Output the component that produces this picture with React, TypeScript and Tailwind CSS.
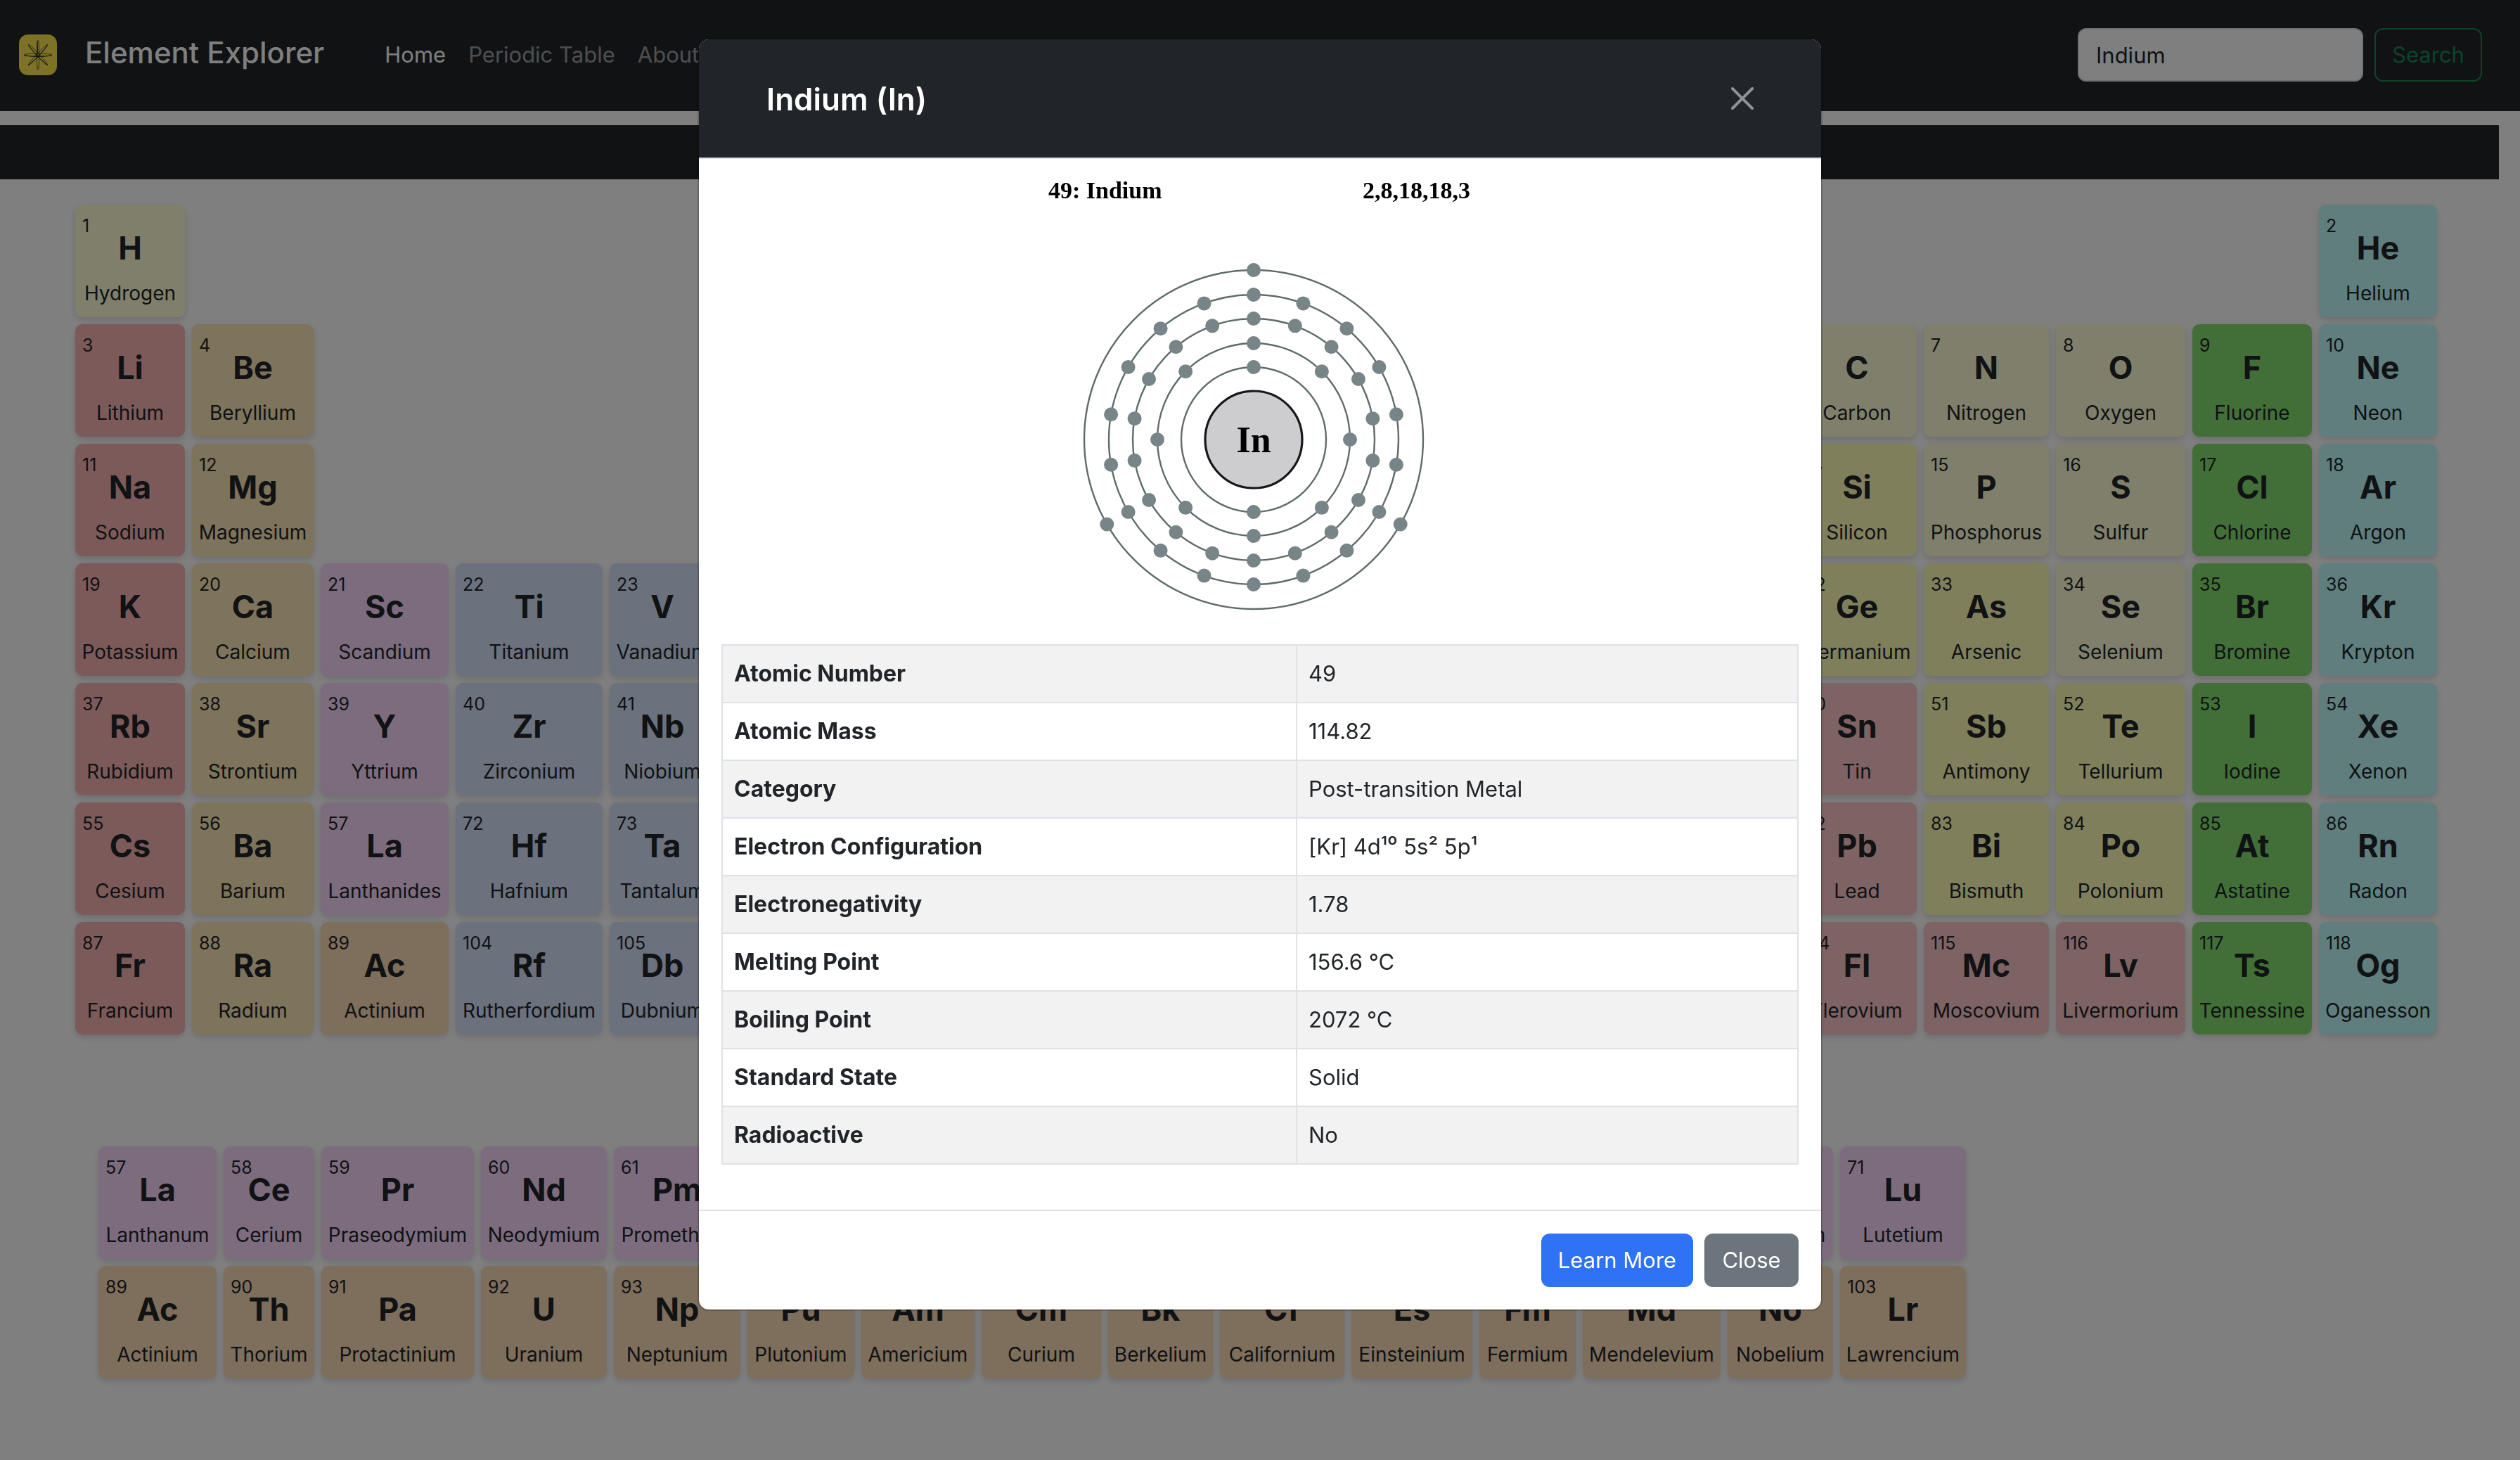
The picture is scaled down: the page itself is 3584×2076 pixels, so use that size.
import React from "react";

type Kind =
  | "nonmetal"
  | "alkali"
  | "alkaline"
  | "transition"
  | "lanthanide"
  | "actinide"
  | "metalloid"
  | "post"
  | "halogen"
  | "noble";

type Cell = [number: number, symbol: string, name: string, kind: Kind];

const kindColor: Record<Kind, string> = {
  nonmetal: "bg-[#ffffd6]",
  alkali: "bg-[#f9b4b4]",
  alkaline: "bg-[#fde6b6]",
  transition: "bg-[#d6e2fa]",
  lanthanide: "bg-[#fad8fc]",
  actinide: "bg-[#fddcb8]",
  metalloid: "bg-[#ffffb8]",
  post: "bg-[#fac6c6]",
  halogen: "bg-[#84de6e]",
  noble: "bg-[#c0fcfc]",
};

const mainRows: (Cell | null)[][] = [
  [[1, "H", "Hydrogen", "nonmetal"], ...Array<null>(16).fill(null), [2, "He", "Helium", "noble"]],
  [
    [3, "Li", "Lithium", "alkali"],
    [4, "Be", "Beryllium", "alkaline"],
    ...Array<null>(10).fill(null),
    [5, "B", "Boron", "metalloid"],
    [6, "C", "Carbon", "nonmetal"],
    [7, "N", "Nitrogen", "nonmetal"],
    [8, "O", "Oxygen", "nonmetal"],
    [9, "F", "Fluorine", "halogen"],
    [10, "Ne", "Neon", "noble"],
  ],
  [
    [11, "Na", "Sodium", "alkali"],
    [12, "Mg", "Magnesium", "alkaline"],
    ...Array<null>(10).fill(null),
    [13, "Al", "Aluminum", "post"],
    [14, "Si", "Silicon", "metalloid"],
    [15, "P", "Phosphorus", "nonmetal"],
    [16, "S", "Sulfur", "nonmetal"],
    [17, "Cl", "Chlorine", "halogen"],
    [18, "Ar", "Argon", "noble"],
  ],
  [
    [19, "K", "Potassium", "alkali"],
    [20, "Ca", "Calcium", "alkaline"],
    [21, "Sc", "Scandium", "lanthanide"],
    [22, "Ti", "Titanium", "transition"],
    [23, "V", "Vanadium", "transition"],
    [24, "Cr", "Chromium", "transition"],
    [25, "Mn", "Manganese", "transition"],
    [26, "Fe", "Iron", "transition"],
    [27, "Co", "Cobalt", "transition"],
    [28, "Ni", "Nickel", "transition"],
    [29, "Cu", "Copper", "transition"],
    [30, "Zn", "Zinc", "transition"],
    [31, "Ga", "Gallium", "post"],
    [32, "Ge", "Germanium", "metalloid"],
    [33, "As", "Arsenic", "metalloid"],
    [34, "Se", "Selenium", "nonmetal"],
    [35, "Br", "Bromine", "halogen"],
    [36, "Kr", "Krypton", "noble"],
  ],
  [
    [37, "Rb", "Rubidium", "alkali"],
    [38, "Sr", "Strontium", "alkaline"],
    [39, "Y", "Yttrium", "lanthanide"],
    [40, "Zr", "Zirconium", "transition"],
    [41, "Nb", "Niobium", "transition"],
    [42, "Mo", "Molybdenum", "transition"],
    [43, "Tc", "Technetium", "transition"],
    [44, "Ru", "Ruthenium", "transition"],
    [45, "Rh", "Rhodium", "transition"],
    [46, "Pd", "Palladium", "transition"],
    [47, "Ag", "Silver", "transition"],
    [48, "Cd", "Cadmium", "transition"],
    [49, "In", "Indium", "post"],
    [50, "Sn", "Tin", "post"],
    [51, "Sb", "Antimony", "metalloid"],
    [52, "Te", "Tellurium", "metalloid"],
    [53, "I", "Iodine", "halogen"],
    [54, "Xe", "Xenon", "noble"],
  ],
  [
    [55, "Cs", "Cesium", "alkali"],
    [56, "Ba", "Barium", "alkaline"],
    [57, "La", "Lanthanides", "lanthanide"],
    [72, "Hf", "Hafnium", "transition"],
    [73, "Ta", "Tantalum", "transition"],
    [74, "W", "Tungsten", "transition"],
    [75, "Re", "Rhenium", "transition"],
    [76, "Os", "Osmium", "transition"],
    [77, "Ir", "Iridium", "transition"],
    [78, "Pt", "Platinum", "transition"],
    [79, "Au", "Gold", "transition"],
    [80, "Hg", "Mercury", "transition"],
    [81, "Tl", "Thallium", "post"],
    [82, "Pb", "Lead", "post"],
    [83, "Bi", "Bismuth", "metalloid"],
    [84, "Po", "Polonium", "metalloid"],
    [85, "At", "Astatine", "halogen"],
    [86, "Rn", "Radon", "noble"],
  ],
  [
    [87, "Fr", "Francium", "alkali"],
    [88, "Ra", "Radium", "alkaline"],
    [89, "Ac", "Actinium", "actinide"],
    [104, "Rf", "Rutherfordium", "transition"],
    [105, "Db", "Dubnium", "transition"],
    [106, "Sg", "Seaborgium", "transition"],
    [107, "Bh", "Bohrium", "transition"],
    [108, "Hs", "Hassium", "transition"],
    [109, "Mt", "Meitnerium", "transition"],
    [110, "Ds", "Darmstadtium", "transition"],
    [111, "Rg", "Roentgenium", "transition"],
    [112, "Cn", "Copernicium", "transition"],
    [113, "Nh", "Nihonium", "post"],
    [114, "Fl", "Flerovium", "post"],
    [115, "Mc", "Moscovium", "post"],
    [116, "Lv", "Livermorium", "post"],
    [117, "Ts", "Tennessine", "halogen"],
    [118, "Og", "Oganesson", "noble"],
  ],
];

const seriesRows: Cell[][] = [
  [
    [57, "La", "Lanthanum", "lanthanide"],
    [58, "Ce", "Cerium", "lanthanide"],
    [59, "Pr", "Praseodymium", "lanthanide"],
    [60, "Nd", "Neodymium", "lanthanide"],
    [61, "Pm", "Promethium", "lanthanide"],
    [62, "Sm", "Samarium", "lanthanide"],
    [63, "Eu", "Europium", "lanthanide"],
    [64, "Gd", "Gadolinium", "lanthanide"],
    [65, "Tb", "Terbium", "lanthanide"],
    [66, "Dy", "Dysprosium", "lanthanide"],
    [67, "Ho", "Holmium", "lanthanide"],
    [68, "Er", "Erbium", "lanthanide"],
    [69, "Tm", "Thulium", "lanthanide"],
    [70, "Yb", "Ytterbium", "lanthanide"],
    [71, "Lu", "Lutetium", "lanthanide"],
  ],
  [
    [89, "Ac", "Actinium", "actinide"],
    [90, "Th", "Thorium", "actinide"],
    [91, "Pa", "Protactinium", "actinide"],
    [92, "U", "Uranium", "actinide"],
    [93, "Np", "Neptunium", "actinide"],
    [94, "Pu", "Plutonium", "actinide"],
    [95, "Am", "Americium", "actinide"],
    [96, "Cm", "Curium", "actinide"],
    [97, "Bk", "Berkelium", "actinide"],
    [98, "Cf", "Californium", "actinide"],
    [99, "Es", "Einsteinium", "actinide"],
    [100, "Fm", "Fermium", "actinide"],
    [101, "Md", "Mendelevium", "actinide"],
    [102, "No", "Nobelium", "actinide"],
    [103, "Lr", "Lawrencium", "actinide"],
  ],
];

const properties: [string, string][] = [
  ["Atomic Number", "49"],
  ["Atomic Mass", "114.82"],
  ["Category", "Post-transition Metal"],
  ["Electron Configuration", "[Kr] 4d¹⁰ 5s² 5p¹"],
  ["Electronegativity", "1.78"],
  ["Melting Point", "156.6 °C"],
  ["Boiling Point", "2072 °C"],
  ["Standard State", "Solid"],
  ["Radioactive", "No"],
];

function ElementCell({ cell }: { cell: Cell | null }) {
  if (!cell) return <span aria-hidden="true" />;
  const [number, symbol, name, kind] = cell;
  return (
    <button
      type="button"
      className={`relative flex h-40 flex-col items-center rounded-[10px] pt-10 whitespace-nowrap shadow-[0_4px_10px_rgba(0,0,0,0.14)] ${kindColor[kind]}`}
    >
      <span className="absolute top-4 left-2.5 text-[25px] leading-7">{number}</span>
      <span className="text-[45px] leading-[44px] font-bold">{symbol}</span>
      <span className="mt-5 text-[28px] leading-[44px]">{name}</span>
    </button>
  );
}

function Logo() {
  return (
    <svg viewBox="0 0 54 58" className="h-[58px] w-[54px]" aria-hidden="true">
      <rect width="54" height="58" rx="13" fill="#fce54d" />
      <g fill="none" stroke="#212529" strokeWidth="0.7">
        <ellipse cx="27" cy="29" rx="1.8" ry="21" />
        <ellipse cx="27" cy="29" rx="20" ry="2" />
        <ellipse cx="27" cy="29" rx="1.8" ry="20" transform="rotate(43 27 29)" />
        <ellipse cx="27" cy="29" rx="1.8" ry="20" transform="rotate(-43 27 29)" />
      </g>
      <g stroke="#212529" strokeWidth="1" strokeLinecap="round" fill="none">
        <path d="M27 32 26 10" />
        <path d="M27 32 40 16" />
        <path d="M27 32 14 16" />
        <path d="M27 32 14 43" />
        <path d="M27 32 40 43" />
        <path d="M8 30q19 3 38 0" />
      </g>
    </svg>
  );
}

const shells = [
  { r: 103, count: 2 },
  { r: 137, count: 8 },
  { r: 172, count: 18 },
  { r: 206, count: 18 },
  { r: 241, count: 3 },
];

function ShellDiagram() {
  const cx = 311;
  const cy = 367;
  return (
    <svg
      viewBox="0 -8 640 634"
      className="mx-auto mb-8 block h-[634px] w-[640px] font-['Liberation_Serif',serif] font-bold"
      role="img"
      aria-label="Electron shells of indium"
    >
      <text x="19" y="24" fontSize="34">
        49: Indium
      </text>
      <text x="466" y="24" fontSize="34">
        2,8,18,18,3
      </text>
      {shells.map(({ r }) => (
        <circle key={r} cx={cx} cy={cy} r={r} fill="none" stroke="#5f6b6b" strokeWidth="2.4" />
      ))}
      {shells.flatMap(({ r, count }) =>
        Array.from({ length: count }, (_, i) => {
          const a = (i / count) * Math.PI * 2;
          return (
            <circle
              key={`${r}-${i}`}
              cx={cx + r * Math.sin(a)}
              cy={cy - r * Math.cos(a)}
              r="10"
              fill="#778588"
            />
          );
        }),
      )}
      <circle cx={cx} cy={cy} r="69" fill="#cdcdcf" stroke="#17171a" strokeWidth="3.2" />
      <text x={cx} y="385" fontSize="52" textAnchor="middle">
        In
      </text>
    </svg>
  );
}

export default function App() {
  return (
    <div className="min-h-screen bg-white font-['Inter','Liberation_Sans',sans-serif] text-[31px] text-[#212529]">
      <header className="flex items-center border-b-2 border-[#212529] bg-[#212529] py-10 pr-[54px] pl-[27px]">
        <a href="#home" className="flex items-center gap-10 text-white">
          <Logo />
          <span className="pb-1.5 text-[42px] leading-[60px] font-medium">Element Explorer</span>
        </a>
        <nav className="ml-[86px] flex gap-8 leading-[48px] text-white/55">
          <a href="#home" className="text-white">
            Home
          </a>
          <a href="#table">Periodic Table</a>
          <a href="#about">About</a>
        </nav>
        <form className="ml-auto flex gap-4" onSubmit={(e) => e.preventDefault()}>
          <input
            type="search"
            aria-label="Search elements"
            defaultValue="Indium"
            className="h-[76px] w-[406px] rounded-xl border-2 border-[#dee2e6] bg-white px-6 text-[#212529]"
          />
          <button
            type="submit"
            className="h-[76px] w-[153px] rounded-xl border-2 border-[#198754] text-[#198754]"
          >
            Search
          </button>
        </form>
      </header>

      <div className="mt-5 mr-[30px] h-[77px] bg-[#212529]" />

      <main className="pt-9">
        <div className="ml-[107px] grid grid-cols-[156px_173px_182px_209px_150px_192px_177px_170px_175px_208px_194px_186px_147px_170px_178px_184px_170px_168px] gap-2.5">
          {mainRows.flatMap((row, r) => row.map((cell, c) => <ElementCell key={`${r}-${c}`} cell={cell} />))}
        </div>
        <div className="mt-[159px] ml-[140px] grid grid-cols-[168px_129px_217px_179px_180px_152px_161px_170px_149px_177px_172px_137px_196px_150px_179px] gap-2.5">
          {seriesRows.flatMap((row, r) => row.map((cell, c) => <ElementCell key={`${r}-${c}`} cell={cell} />))}
        </div>
      </main>

      <div className="fixed inset-0 flex items-start justify-center bg-black/50 pt-[54px]">
        <section
          role="dialog"
          aria-modal="true"
          aria-labelledby="dialog-title"
          className="w-full max-w-[1600px] rounded-2xl border-2 border-black/20 bg-white bg-clip-padding"
        >
          <div className="flex h-[170px] items-center justify-between rounded-t-[14px] border-b-2 border-[#dee2e6] bg-[#212529] px-24 text-white">
            <h1 id="dialog-title" className="pt-0.5 text-[44px] leading-[72px] font-semibold">
              Indium (In)
            </h1>
            <button type="button" aria-label="Close" className="text-white/50">
              <svg viewBox="0 0 16 16" className="size-8" fill="currentColor">
                <path d="M.293.293a1 1 0 0 1 1.414 0L8 6.586 14.293.293a1 1 0 1 1 1.414 1.414L9.414 8l6.293 6.293a1 1 0 0 1-1.414 1.414L8 9.414l-6.293 6.293a1 1 0 0 1-1.414-1.414L6.586 8 .293 1.707a1 1 0 0 1 0-1.414z" />
              </svg>
            </button>
          </div>
          <div className="px-8 pt-6 pb-16">
            <ShellDiagram />
            <table className="w-full table-fixed border-collapse text-left leading-[48px]">
              <colgroup>
                <col className="w-[817px]" />
                <col />
              </colgroup>
              <tbody>
                {properties.map(([label, value]) => (
                  <tr key={label} className="odd:bg-[#f2f2f2]">
                    <th scope="row" className="border-2 border-[#dee2e6] p-4 text-[32px] font-bold">
                      {label}
                    </th>
                    <td className="border-2 border-[#dee2e6] p-4">{value}</td>
                  </tr>
                ))}
              </tbody>
            </table>
          </div>
          <footer className="flex justify-end gap-4 border-t-2 border-[#dee2e6] p-8 text-white">
            <button type="button" className="h-[76px] w-[216px] rounded-xl bg-[#2f72f6]">
              Learn More
            </button>
            <button type="button" className="h-[76px] w-[134px] rounded-xl bg-[#6c757d]">
              Close
            </button>
          </footer>
        </section>
      </div>
    </div>
  );
}
